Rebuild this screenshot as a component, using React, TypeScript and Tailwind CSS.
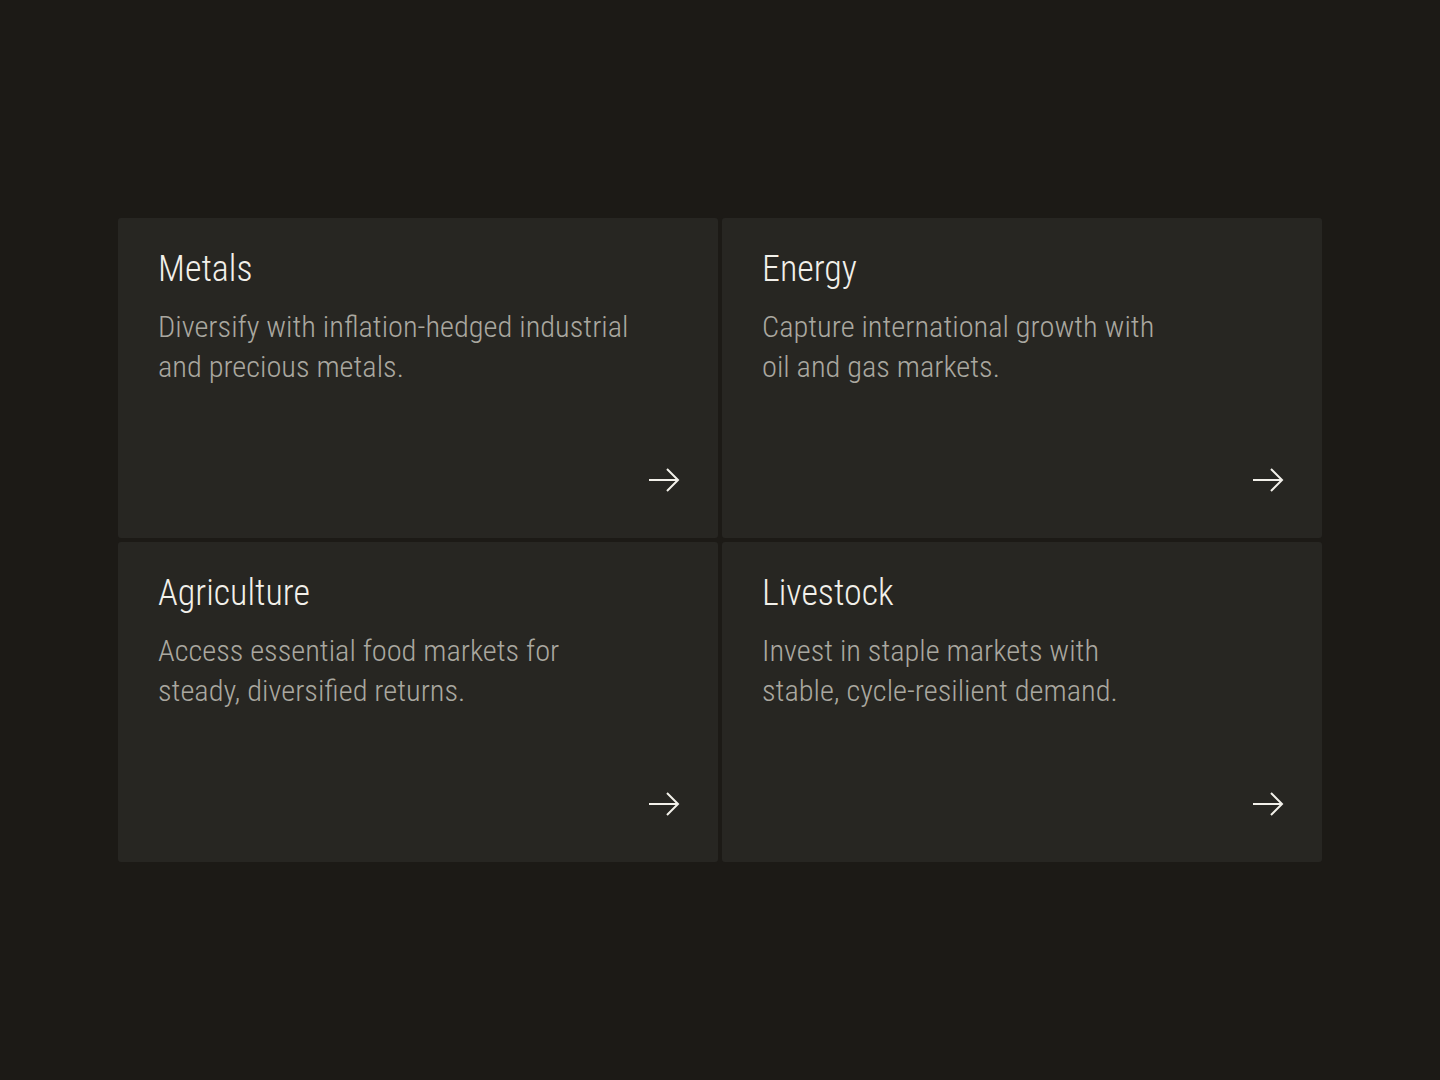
const MARKETS = [
  {
    title: "Metals",
    desc: ["Diversify with inflation-hedged industrial", "and precious metals."],
  },
  {
    title: "Energy",
    desc: ["Capture international growth with", "oil and gas markets."],
  },
  {
    title: "Agriculture",
    desc: ["Access essential food markets for", "steady, diversified returns."],
  },
  {
    title: "Livestock",
    desc: ["Invest in staple markets with", "stable, cycle-resilient demand."],
  },
];

function ArrowRight() {
  return (
    <svg width="32" height="26" viewBox="0 0 32 26" fill="none" className="text-[#f2f0ea]">
      <path d="M1 13H30" stroke="currentColor" strokeWidth="2" />
      <path d="M19 2L30 13L19 24" stroke="currentColor" strokeWidth="2" />
    </svg>
  );
}

export default function App() {
  return (
    <div
      className="min-h-screen bg-[#1c1a16] flex items-center justify-center font-light"
      style={{ fontFamily: 'Roboto, "Liberation Sans", sans-serif', fontStretch: "condensed" }}
    >
      <div className="grid grid-cols-2 gap-1 w-[1204px]">
        {MARKETS.map((m) => (
          <a
            key={m.title}
            href="#"
            className="h-[320px] bg-[#272622] rounded-[3px] pt-[27px] pl-10 pr-[38px] pb-[45px] flex flex-col"
          >
            <h3 className="text-[36px] leading-[48px] text-[#f2f0ea]">{m.title}</h3>
            <p className="mt-[14px] text-[30.4px] leading-[40px] text-[#aaa8a0] whitespace-nowrap">
              {m.desc[0]}
              <br />
              {m.desc[1]}
            </p>
            <div className="mt-auto flex justify-end">
              <ArrowRight />
            </div>
          </a>
        ))}
      </div>
    </div>
  );
}
